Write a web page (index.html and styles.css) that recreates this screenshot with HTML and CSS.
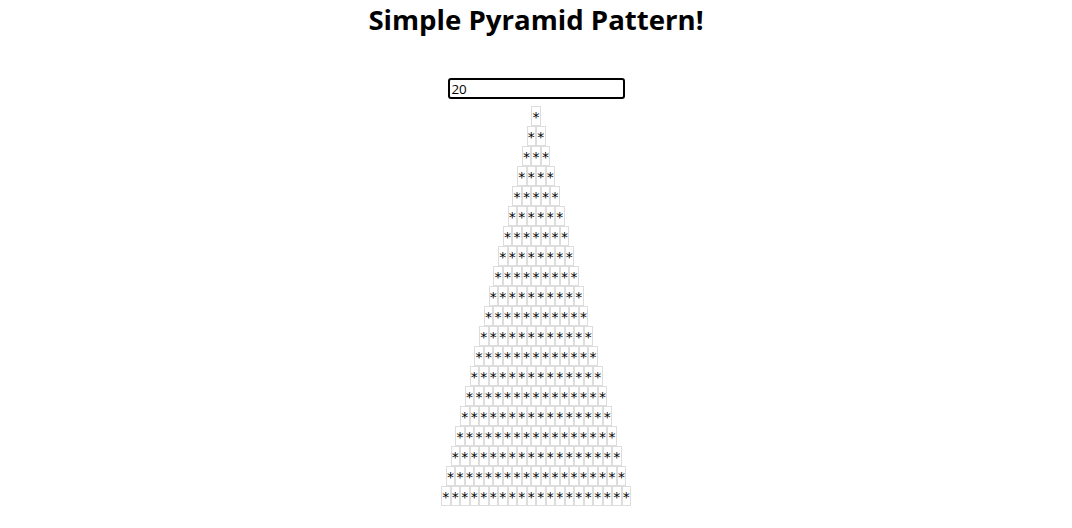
FILE: index.html
```html
<!DOCTYPE html>
<html>
<head>
<meta charset="utf-8">
<title>Simple Pyramid Pattern</title>
<link rel="stylesheet" href="styles.css">
</head>
<body>
<div class="app">
  <h1 class="title">Simple Pyramid Pattern!</h1>
  <input class="count" type="text" value="20">
  <div class="pyramid">
    <div class="row"><span class="cell">*</span></div>
    <div class="row"><span class="cell">*</span><span class="cell">*</span></div>
    <div class="row"><span class="cell">*</span><span class="cell">*</span><span class="cell">*</span></div>
    <div class="row"><span class="cell">*</span><span class="cell">*</span><span class="cell">*</span><span class="cell">*</span></div>
    <div class="row"><span class="cell">*</span><span class="cell">*</span><span class="cell">*</span><span class="cell">*</span><span class="cell">*</span></div>
    <div class="row"><span class="cell">*</span><span class="cell">*</span><span class="cell">*</span><span class="cell">*</span><span class="cell">*</span><span class="cell">*</span></div>
    <div class="row"><span class="cell">*</span><span class="cell">*</span><span class="cell">*</span><span class="cell">*</span><span class="cell">*</span><span class="cell">*</span><span class="cell">*</span></div>
    <div class="row"><span class="cell">*</span><span class="cell">*</span><span class="cell">*</span><span class="cell">*</span><span class="cell">*</span><span class="cell">*</span><span class="cell">*</span><span class="cell">*</span></div>
    <div class="row"><span class="cell">*</span><span class="cell">*</span><span class="cell">*</span><span class="cell">*</span><span class="cell">*</span><span class="cell">*</span><span class="cell">*</span><span class="cell">*</span><span class="cell">*</span></div>
    <div class="row"><span class="cell">*</span><span class="cell">*</span><span class="cell">*</span><span class="cell">*</span><span class="cell">*</span><span class="cell">*</span><span class="cell">*</span><span class="cell">*</span><span class="cell">*</span><span class="cell">*</span></div>
    <div class="row"><span class="cell">*</span><span class="cell">*</span><span class="cell">*</span><span class="cell">*</span><span class="cell">*</span><span class="cell">*</span><span class="cell">*</span><span class="cell">*</span><span class="cell">*</span><span class="cell">*</span><span class="cell">*</span></div>
    <div class="row"><span class="cell">*</span><span class="cell">*</span><span class="cell">*</span><span class="cell">*</span><span class="cell">*</span><span class="cell">*</span><span class="cell">*</span><span class="cell">*</span><span class="cell">*</span><span class="cell">*</span><span class="cell">*</span><span class="cell">*</span></div>
    <div class="row"><span class="cell">*</span><span class="cell">*</span><span class="cell">*</span><span class="cell">*</span><span class="cell">*</span><span class="cell">*</span><span class="cell">*</span><span class="cell">*</span><span class="cell">*</span><span class="cell">*</span><span class="cell">*</span><span class="cell">*</span><span class="cell">*</span></div>
    <div class="row"><span class="cell">*</span><span class="cell">*</span><span class="cell">*</span><span class="cell">*</span><span class="cell">*</span><span class="cell">*</span><span class="cell">*</span><span class="cell">*</span><span class="cell">*</span><span class="cell">*</span><span class="cell">*</span><span class="cell">*</span><span class="cell">*</span><span class="cell">*</span></div>
    <div class="row"><span class="cell">*</span><span class="cell">*</span><span class="cell">*</span><span class="cell">*</span><span class="cell">*</span><span class="cell">*</span><span class="cell">*</span><span class="cell">*</span><span class="cell">*</span><span class="cell">*</span><span class="cell">*</span><span class="cell">*</span><span class="cell">*</span><span class="cell">*</span><span class="cell">*</span></div>
    <div class="row"><span class="cell">*</span><span class="cell">*</span><span class="cell">*</span><span class="cell">*</span><span class="cell">*</span><span class="cell">*</span><span class="cell">*</span><span class="cell">*</span><span class="cell">*</span><span class="cell">*</span><span class="cell">*</span><span class="cell">*</span><span class="cell">*</span><span class="cell">*</span><span class="cell">*</span><span class="cell">*</span></div>
    <div class="row"><span class="cell">*</span><span class="cell">*</span><span class="cell">*</span><span class="cell">*</span><span class="cell">*</span><span class="cell">*</span><span class="cell">*</span><span class="cell">*</span><span class="cell">*</span><span class="cell">*</span><span class="cell">*</span><span class="cell">*</span><span class="cell">*</span><span class="cell">*</span><span class="cell">*</span><span class="cell">*</span><span class="cell">*</span></div>
    <div class="row"><span class="cell">*</span><span class="cell">*</span><span class="cell">*</span><span class="cell">*</span><span class="cell">*</span><span class="cell">*</span><span class="cell">*</span><span class="cell">*</span><span class="cell">*</span><span class="cell">*</span><span class="cell">*</span><span class="cell">*</span><span class="cell">*</span><span class="cell">*</span><span class="cell">*</span><span class="cell">*</span><span class="cell">*</span><span class="cell">*</span></div>
    <div class="row"><span class="cell">*</span><span class="cell">*</span><span class="cell">*</span><span class="cell">*</span><span class="cell">*</span><span class="cell">*</span><span class="cell">*</span><span class="cell">*</span><span class="cell">*</span><span class="cell">*</span><span class="cell">*</span><span class="cell">*</span><span class="cell">*</span><span class="cell">*</span><span class="cell">*</span><span class="cell">*</span><span class="cell">*</span><span class="cell">*</span><span class="cell">*</span></div>
    <div class="row"><span class="cell">*</span><span class="cell">*</span><span class="cell">*</span><span class="cell">*</span><span class="cell">*</span><span class="cell">*</span><span class="cell">*</span><span class="cell">*</span><span class="cell">*</span><span class="cell">*</span><span class="cell">*</span><span class="cell">*</span><span class="cell">*</span><span class="cell">*</span><span class="cell">*</span><span class="cell">*</span><span class="cell">*</span><span class="cell">*</span><span class="cell">*</span><span class="cell">*</span></div>
  </div>
</div>
</body>
</html>
```
FILE: styles.css
```css
html, body {
  margin: 0;
  padding: 0;
  background: #fff;
}
body {
  font-family: "Open Sans", "Noto Sans", sans-serif;
  color: #000;
}
.app {
  display: flex;
  flex-direction: column;
  align-items: center;
}
.title {
  margin: 0;
  font-size: 27.6px;
  font-weight: 700;
  line-height: 38px;
}
.count {
  box-sizing: border-box;
  margin-top: 40px;
  width: 177px;
  height: 21px;
  border: 2px solid #000;
  border-radius: 3px;
  padding: 0 2px;
  font-family: "Open Sans", "Noto Sans", sans-serif;
  font-size: 13.33px;
  outline: none;
}
.pyramid {
  margin-top: 7px;
  display: flex;
  flex-direction: column;
  align-items: center;
}
.row {
  display: flex;
  justify-content: center;
}
.cell {
  box-sizing: border-box;
  width: 9.5px;
  height: 20px;
  border: 1px solid #ddd;
  font-family: "DejaVu Sans", sans-serif;
  font-size: 14px;
  line-height: 20px;
  text-align: center;
  overflow: hidden;
}
```
